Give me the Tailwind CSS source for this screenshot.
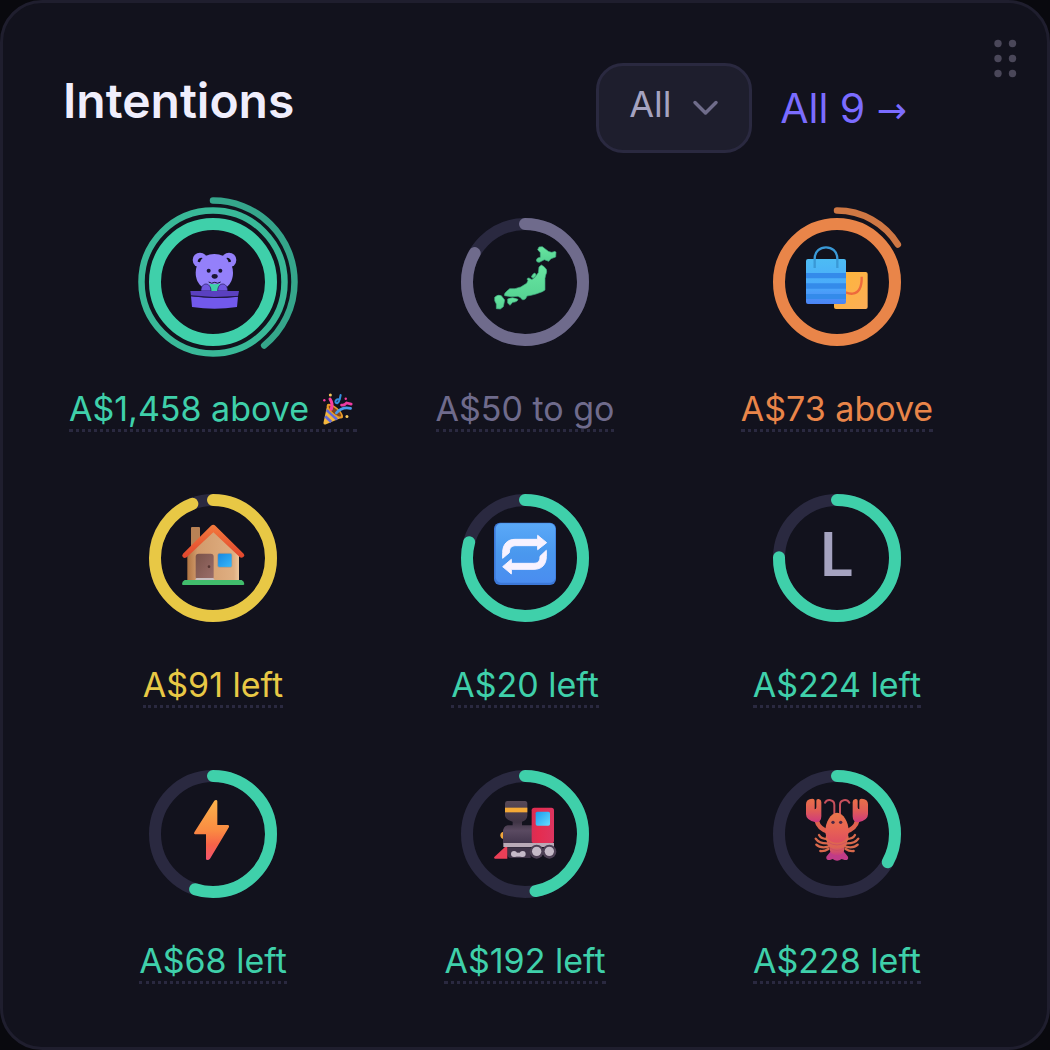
<!DOCTYPE html>
<html lang="en">
<head>
  <meta charset="UTF-8">
  <meta name="viewport" content="width=device-width, initial-scale=1">
  <title>Intentions</title>
  <script src="https://cdn.jsdelivr.net/npm/@tailwindcss/browser@4"></script>
</head>
<body class="bg-[#09090e] font-['Inter',sans-serif]">

  <main class="relative min-h-screen bg-[#12121d] border-3 border-[#1f1e2e] rounded-[42px] px-15 pt-15 pb-12">

    <!-- Drag handle -->
    <button type="button" aria-label="Move widget" class="absolute top-9 right-[30px] cursor-grab">
      <svg class="w-6 h-10" viewBox="0 0 24 40" fill="#4a4759">
        <circle cx="5" cy="4.500" r="3.700"/><circle cx="19.500" cy="4.500" r="3.700"/>
        <circle cx="5" cy="19.500" r="3.700"/><circle cx="19.500" cy="19.500" r="3.700"/>
        <circle cx="5" cy="34.500" r="3.700"/><circle cx="19.500" cy="34.500" r="3.700"/>
      </svg>
    </button>

    <!-- Header -->
    <header class="flex items-center justify-between pr-20 mb-[39px]">
      <h1 class="text-5xl leading-[60px] pb-3.5 font-semibold text-[#f0eefc]">Intentions</h1>
      <div class="flex items-center gap-7">
        <div class="relative">
          <select aria-label="Filter intentions" class="block appearance-none w-39 h-[90px] pl-[30px] pb-2 text-4xl text-[#a5a3c0] bg-[#1e1e2d] border-3 border-[#2a2940] rounded-[27px]">
            <option>All</option>
            <option>Saving</option>
            <option>Spending</option>
          </select>
          <svg class="absolute top-9 right-8 w-7 h-5 pointer-events-none" viewBox="0 0 28 20" fill="none" stroke="#6f6c8a" stroke-width="3.500" stroke-linecap="round" stroke-linejoin="round">
            <path d="M3 3.500 L13.500 14 L24 3.500"/>
          </svg>
        </div>
        <a href="#" class="text-[41px] leading-[60px] text-[#7b6cff]">All 9 <span class="font-['DejaVu_Sans',sans-serif] text-4xl">→</span></a>
      </div>
    </header>

    <!-- Intention rings -->
    <ul class="grid grid-cols-3 gap-x-[18px] gap-y-9 px-[3px] text-[34px] leading-[41px] text-[#3fd0aa] whitespace-nowrap">

      <li class="flex flex-col items-center gap-3">
        <svg class="size-[180px]" viewBox="0 0 180 180" fill="none">
          <g stroke="#3fd0aa" stroke-linecap="round" transform="rotate(-90 90 90)">
            <circle cx="90" cy="90" r="58" stroke-width="12"/>
            <circle cx="90" cy="90" r="71.500" stroke-width="6.500" opacity=".88"/>
            <circle cx="90" cy="90" r="81.500" stroke-width="6.500" opacity=".78" pathLength="100" stroke-dasharray="39.200 100"/>
          </g>
          <!-- bear in a box -->
          <g transform="translate(90 90) scale(.3333) translate(-249 -291)">
            <g fill="#9480fa">
              <circle cx="210" cy="225" r="22"/><circle cx="297" cy="225" r="22"/>
              <path d="M253 207c35 0 56 26 56 56 0 18-7 33-18 42h-75c-12-9-19-24-19-42 0-30 22-56 56-56z"/>
            </g>
            <path fill="#12121d" d="M203 230a11 11 0 0 1 15-11c-4 4-7 8-8 13zM289 219a11 11 0 0 1 14 11l-7 2c-1-5-4-9-7-13z"/>
            <g fill="#1a1433">
              <circle cx="236" cy="257" r="6"/><circle cx="271" cy="257" r="6"/>
              <ellipse cx="254" cy="274" rx="9" ry="7"/>
            </g>
            <path d="M236 291q9 7 18 1q9 6 18-1" stroke="#1a1433" stroke-width="3"/>
            <path fill="#3fd0aa" d="M238 296l16 2 16-2-5 22h-22z"/>
            <path fill="#7057e0" stroke="#241a58" stroke-width="2" d="M213 318c0-28 30-28 30 0zM263 318c0-28 30-28 30 0z"/>
            <path fill="#5a40c0" d="M181 318h146l-3 16q-70 7-141-2z"/>
            <path fill="#7259ec" d="M183 334q70 9 141 1l-3 31q-67 11-135 0z"/>
            <path stroke="#1c1540" stroke-width="2.500" d="M182 332q70 10 142 2"/>
          </g>
        </svg>
        <a href="#" class="flex items-center gap-3 pt-1 pr-1 border-b-3 border-dotted border-[#2a2940]">
          A$1,458 above
          <svg class="size-8" viewBox="0 0 100 106" fill="none" stroke-linecap="round">
            <path fill="#f4b73c" d="M18 38L69 80 12 104q-6 2-7-5z"/>
            <path stroke="#626ad8" stroke-width="9" stroke-linecap="butt" d="M16 56L50 88M11 77L31 96"/>
            <ellipse cx="43" cy="60" rx="34" ry="13" transform="rotate(40 43 60)" fill="#e79b28"/>
            <ellipse cx="43" cy="60" rx="26" ry="8" transform="rotate(40 43 60)" fill="#80451f"/>
            <path stroke="#f93f9c" stroke-width="10" d="M31 54c5-14 3-24-4-34"/>
            <path stroke="#4a9cea" stroke-width="9" d="M48 66c13-15 28-20 47-15"/>
            <path stroke="#ee3ba1" stroke-width="9" d="M65 40c9 2 13-2 17-7l15 4"/>
            <path stroke="#338edd" stroke-width="7" d="M62 7c-3 20-9 30-15 26-6-5 2-16 12-11"/>
            <g fill="#f43e9f"><circle cx="8" cy="24" r="4"/><circle cx="79" cy="19" r="4"/></g>
            <g fill="#f4c75a"><circle cx="28" cy="7" r="5"/><circle cx="83" cy="78" r="5"/></g>
          </svg>
        </a>
      </li>

      <li class="flex flex-col items-center gap-3">
        <svg class="size-[180px]" viewBox="0 0 180 180" fill="none">
          <g stroke-width="12" stroke-linecap="round" transform="rotate(-90 90 90)">
            <circle cx="90" cy="90" r="58" stroke="#2a2940"/>
            <circle cx="90" cy="90" r="58" stroke="#6f6b8c" pathLength="100" stroke-dasharray="83.300 100"/>
          </g>
          <!-- islands -->
          <g fill="url(#land)" stroke="#3fae80" stroke-width="2" stroke-linejoin="round" transform="translate(90 90) scale(.3333) translate(-225 -216)">
            <path d="M267 111l10-1 18 14q10 6 20 0l3 3-1 14-14 5-7 8-13-5-15 8q-9 0-9-7l4-6 8-2v-14l-8-9z"/>
            <path d="M274 165q8 3 15 13 3 8-2 17l-2 10v35l-8 5-19 7-15 4-12 2-4 8q-10 8-15-3l-8-4-22 1-18-3q-3-5 6-13l9-8h16l17-5 18-11 4-8q-6-8 3-8 9 8 15 1l13-17 2-17z"/>
            <path d="M253 189q7 2 4 9l-7 7-6-4 3-6z"/>
            <path d="M173 267q15-8 31 1-1 8-16 9l-8 9-7-7z"/>
            <path d="M134 262q10-10 20-5l10 13-4 20-9 7-12-1v-14q-7-9-5-20z"/>
          </g>
          <defs>
            <linearGradient id="land" x1="0" y1="0" x2="0" y2="1"><stop stop-color="#68e6a1"/><stop offset="1" stop-color="#55d292"/></linearGradient>
          </defs>
        </svg>
        <a href="#" class="block pt-1 border-b-3 border-dotted border-[#2a2940] text-[#6f6b8c]">A$50 to go</a>
      </li>

      <li class="flex flex-col items-center gap-3">
        <svg class="size-[180px]" viewBox="0 0 180 180" fill="none">
          <g stroke="#e98549" stroke-linecap="round" transform="rotate(-90 90 90)">
            <circle cx="90" cy="90" r="58" stroke-width="12"/>
            <circle cx="90" cy="90" r="71.500" stroke-width="6.500" opacity=".88" pathLength="100" stroke-dasharray="16.200 100"/>
          </g>
          <!-- shopping bags -->
          <g transform="translate(90 90) scale(.3333) translate(-216 -246)">
            <rect x="207" y="216" width="101" height="111" rx="6" fill="url(#bag2)"/>
            <path stroke="#ee6a3c" stroke-width="7" d="M290 230c1 31-9 48-27 51-8 1-14-1-22-4"/>
            <rect x="123" y="177" width="120" height="135" rx="6" fill="url(#bag1)"/>
            <path fill="#348bea" d="M123 219h120v16H123zM123 250h120v16H123zM123 282h120v15H123z"/>
            <path stroke="#3a99d6" stroke-width="7" d="M149 204v-28c0-45 68-45 68 0v28"/>
          </g>
          <defs>
            <linearGradient id="bag1" x1="0" y1="0" x2="0" y2="1"><stop stop-color="#4dbcf4"/><stop offset=".6" stop-color="#4aaafb"/><stop offset="1" stop-color="#4b83f5"/></linearGradient>
            <linearGradient id="bag2" x1="0" y1="0" x2="1" y2="1"><stop stop-color="#fdb638"/><stop offset="1" stop-color="#fdae57"/></linearGradient>
          </defs>
        </svg>
        <a href="#" class="block pt-1 border-b-3 border-dotted border-[#2a2940] text-[#e98549]">A$73 above</a>
      </li>

      <li class="flex flex-col items-center gap-3">
        <svg class="size-[180px]" viewBox="0 0 180 180" fill="none">
          <g stroke-width="12" stroke-linecap="round" transform="rotate(-90 90 90)">
            <circle cx="90" cy="90" r="58" stroke="#2a2940"/>
            <circle cx="90" cy="90" r="58" stroke="#e8c845" pathLength="100" stroke-dasharray="94.200 100"/>
          </g>
          <!-- house -->
          <g transform="translate(90 90) scale(.3333) translate(-219 -219)">
            <rect x="153" y="126" width="27" height="60" rx="3" fill="#b98255"/>
            <path fill="url(#wall)" d="M219 133L297 204v84H142v-84z"/>
            <path fill="url(#roof)" d="M213 122q7-6 13 0l85 84q5 5-1 10-6 4-11 0l-79-74-80 75q-6 4-11 0-5-5 0-11z"/>
            <rect x="167" y="206" width="54" height="78" rx="9" fill="url(#door)"/>
            <circle cx="207" cy="245" r="4" fill="#563632"/>
            <rect x="233" y="205" width="43" height="42" rx="5" fill="url(#pane)" stroke="#c9966f" stroke-width="2"/>
            <path fill="#c8bec0" d="M169 279h51l6 9h-62z"/>
            <path fill="#41bd6c" d="M134 285h171q8 5 8 12 0 3-4 3H130q-4 0-4-3 0-7 8-12z"/>
          </g>
          <defs>
            <linearGradient id="wall"><stop stop-color="#b17543"/><stop offset=".2" stop-color="#d29b6c"/><stop offset=".9" stop-color="#dfaf82"/><stop offset="1" stop-color="#edc79d"/></linearGradient>
            <linearGradient id="roof" x1="0" y1="0" x2="0" y2="1"><stop stop-color="#f47b3d"/><stop offset="1" stop-color="#e2452d"/></linearGradient>
            <linearGradient id="door" x1="0" y1="0" x2="1" y2="1"><stop stop-color="#795249"/><stop offset="1" stop-color="#9b6e6a"/></linearGradient>
            <linearGradient id="pane" x1="0" y1="0" x2="1" y2="1"><stop stop-color="#1686e0"/><stop offset="1" stop-color="#37b9fa"/></linearGradient>
          </defs>
        </svg>
        <a href="#" class="block pt-1 border-b-3 border-dotted border-[#2a2940] text-[#e8c845]">A$91 left</a>
      </li>

      <li class="flex flex-col items-center gap-3">
        <svg class="size-[180px]" viewBox="0 0 180 180" fill="none">
          <g stroke-width="12" stroke-linecap="round" transform="rotate(-90 90 90)">
            <circle cx="90" cy="90" r="58" stroke="#2a2940"/>
            <circle cx="90" cy="90" r="58" stroke="#3fd0aa" pathLength="100" stroke-dasharray="79.400 100"/>
          </g>
          <!-- repeat -->
          <g transform="translate(90 90) scale(.3333) translate(-225 -219)">
            <rect x="132" y="113" width="186" height="187" rx="18" fill="#3c78d8"/>
            <rect x="137" y="115" width="179" height="178" rx="16" fill="url(#tile)"/>
            <path fill="#f8f2ff" stroke="#f8f2ff" stroke-width="3" stroke-linejoin="round" d="M158 220v-17c0-25 14-40 37-40h68v-12l27 22-27 21v-12h-66c-13 0-19 7-19 21zM289 196v18c0 25-14 39-37 39h-68v14l-26-22 26-22v12h67c13 0 19-7 19-19v-2z"/>
          </g>
          <defs>
            <linearGradient id="tile" x1="0" y1="0" x2="0" y2="1"><stop stop-color="#5aa9f8"/><stop offset=".5" stop-color="#4a98ee"/><stop offset="1" stop-color="#4a8df0"/></linearGradient>
          </defs>
        </svg>
        <a href="#" class="block pt-1 border-b-3 border-dotted border-[#2a2940]">A$20 left</a>
      </li>

      <li class="flex flex-col items-center gap-3">
        <svg class="size-[180px]" viewBox="0 0 180 180" fill="none">
          <g stroke-width="12" stroke-linecap="round" transform="rotate(-90 90 90)">
            <circle cx="90" cy="90" r="58" stroke="#2a2940"/>
            <circle cx="90" cy="90" r="58" stroke="#3fd0aa" pathLength="100" stroke-dasharray="75.200 100"/>
          </g>
          <text x="90" y="108" text-anchor="middle" font-size="60" font-weight="600" fill="#a5a3c0">L</text>
        </svg>
        <a href="#" class="block pt-1 border-b-3 border-dotted border-[#2a2940]">A$224 left</a>
      </li>

      <li class="flex flex-col items-center gap-3">
        <svg class="size-[180px]" viewBox="0 0 180 180" fill="none">
          <g stroke-width="12" stroke-linecap="round" transform="rotate(-90 90 90)">
            <circle cx="90" cy="90" r="58" stroke="#2a2940"/>
            <circle cx="90" cy="90" r="58" stroke="#3fd0aa" pathLength="100" stroke-dasharray="55 100"/>
          </g>
          <!-- lightning bolt -->
          <g transform="translate(90 90) scale(.3333) translate(-219 -222)">
            <path fill="url(#bolt)" d="M223 122q2-2 5-2 4 0 4 4v71h32q5 1 3 6l-57 95q-3 4-8 4-4 0-4-4v-73h-33q-5-1-2-6z"/>
          </g>
          <defs>
            <linearGradient id="bolt" x1="0" y1="0" x2="0" y2="1"><stop stop-color="#fcb34c"/><stop offset=".5" stop-color="#fa8c42"/><stop offset=".75" stop-color="#f76248"/><stop offset="1" stop-color="#f35571"/></linearGradient>
          </defs>
        </svg>
        <a href="#" class="block pt-1 border-b-3 border-dotted border-[#2a2940]">A$68 left</a>
      </li>

      <li class="flex flex-col items-center gap-3">
        <svg class="size-[180px]" viewBox="0 0 180 180" fill="none">
          <g stroke-width="12" stroke-linecap="round" transform="rotate(-90 90 90)">
            <circle cx="90" cy="90" r="58" stroke="#2a2940"/>
            <circle cx="90" cy="90" r="58" stroke="#3fd0aa" pathLength="100" stroke-dasharray="47.100 100"/>
          </g>
          <!-- locomotive -->
          <g transform="translate(90 90) scale(.3333) translate(-225 -222)">
            <path fill="#f0a53a" d="M160 215q-9 2-9 11t9 11z"/>
            <path fill="url(#boiler)" d="M171 123h54q7 0 7 8v36q-1 13-16 18v11h30v54h-87v-33q0-18 14-21h15v-11q-21-6-23-18v-36q0-8 6-8z"/>
            <path fill="#f4a936" d="M165 143h67v14h-67z"/>
            <path fill="#3f3448" d="M172 262h70v32h-60q-9 0-10-9z"/>
            <rect x="245" y="143" width="67" height="107" rx="8" fill="url(#cab)"/>
            <rect x="257" y="155" width="43" height="42" rx="5" fill="url(#glass)"/>
            <path fill="#b9aab7" d="M160 249h152v12H160z"/>
            <path fill="#ea3f57" d="M165 261h7v35h-37q-5-1-2-5z"/>
            <g fill="#4d4055"><circle cx="260" cy="275" r="21"/><circle cx="298" cy="275" r="21"/></g>
            <g fill="#c5bac8"><circle cx="260" cy="274" r="14"/><circle cx="298" cy="274" r="14"/><circle cx="192" cy="282" r="9"/><circle cx="218" cy="282" r="9"/></g>
            <path stroke="#c5bac8" stroke-width="12" d="M192 284h26"/>
          </g>
          <defs>
            <linearGradient id="boiler" x1="0" y1="0" x2="0" y2="1"><stop stop-color="#584957"/><stop offset=".5" stop-color="#3f3445"/><stop offset=".7" stop-color="#5a4a61"/><stop offset="1" stop-color="#43364d"/></linearGradient>
            <linearGradient id="cab"><stop stop-color="#d82d54"/><stop offset=".3" stop-color="#e52c4f"/><stop offset="1" stop-color="#dd3560"/></linearGradient>
            <linearGradient id="glass" x1="0" y1="0" x2="1" y2="1"><stop stop-color="#1a9bee"/><stop offset="1" stop-color="#68dcff"/></linearGradient>
          </defs>
        </svg>
        <a href="#" class="block pt-1 border-b-3 border-dotted border-[#2a2940]">A$192 left</a>
      </li>

      <li class="flex flex-col items-center gap-3">
        <svg class="size-[180px]" viewBox="0 0 180 180" fill="none">
          <g stroke-width="12" stroke-linecap="round" transform="rotate(-90 90 90)">
            <circle cx="90" cy="90" r="58" stroke="#2a2940"/>
            <circle cx="90" cy="90" r="58" stroke="#3fd0aa" pathLength="100" stroke-dasharray="33.100 100"/>
          </g>
          <!-- lobster -->
          <g transform="translate(90 90) scale(.3333) translate(-216 -222)">
            <g stroke-linecap="round">
              <path stroke="#c8505c" stroke-width="6" d="M208 162v-27c0-17-21-19-28-7M225 162v-27c0-17 21-19 28-7"/>
              <path stroke="#df614e" stroke-width="14" d="M156 184q4 20 33 31M276 184q-4 20-33 31"/>
              <path stroke="#d8694c" stroke-width="7" d="M162 225q6 12 26 12M270 225q-6 12-26 12M152 236q10 15 37 14M280 236q-10 15-37 14M154 254q12 12 36 6M278 254q-12 12-36 6M166 273q12 2 24-6M266 273q-12 2-24-6"/>
            </g>
            <g fill="url(#claw)">
              <path d="M142 116q7 0 7 6v26q5 0 5-6v-20q0-6 7-5 8 2 8 9v43q0 18-17 18-29-6-29-24v-30q0-16 19-17z"/>
              <path d="M290 116q-7 0-7 6v26q-5 0-5-6v-20q0-6-7-5-8 2-8 9v43q0 18 17 18 29-6 29-24v-30q0-16-19-17z"/>
            </g>
            <path fill="#c03c88" d="M199 272q-9 10-15 18-2 11 11 10l8-3q13 10 27 0l9 3q13 1 10-10-6-8-15-18z"/>
            <path fill="url(#tail)" d="M184 225h65q5 10-3 20 1 10-7 16-1 15-8 20-15 10-30 0-7-5-8-20-8-6-7-16-7-10-2-20z"/>
            <path stroke="#c94a67" stroke-width="2" d="M188 246q28 18 56 0M195 264q21 15 42 0"/>
            <path fill="url(#shell)" d="M216 158c19 0 35 29 35 55 0 23-15 35-35 35s-35-12-35-35c0-26 16-55 35-55z"/>
            <g fill="#4c2845"><circle cx="204" cy="187" r="5"/><circle cx="227" cy="187" r="5"/></g>
          </g>
          <defs>
            <linearGradient id="claw" x1="0" y1="0" x2="0" y2="1"><stop stop-color="#e8704a"/><stop offset=".5" stop-color="#e05c56"/><stop offset="1" stop-color="#ce3a7e"/></linearGradient>
            <linearGradient id="shell" x1="0" y1="0" x2="0" y2="1"><stop stop-color="#e9764a"/><stop offset=".5" stop-color="#e96452"/><stop offset="1" stop-color="#de4f60"/></linearGradient>
            <linearGradient id="tail" x1="0" y1="0" x2="0" y2="1"><stop stop-color="#e06c4b"/><stop offset=".6" stop-color="#dd6354"/><stop offset="1" stop-color="#c73d80"/></linearGradient>
          </defs>
        </svg>
        <a href="#" class="block pt-1 border-b-3 border-dotted border-[#2a2940]">A$228 left</a>
      </li>

    </ul>
  </main>

</body>
</html>
